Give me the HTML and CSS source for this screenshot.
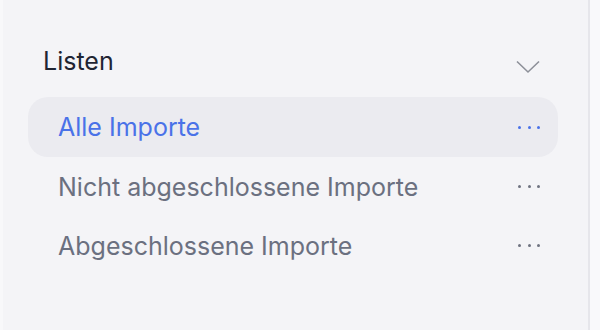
FILE: index.html
```html
<!DOCTYPE html>
<html lang="de">
<head>
<meta charset="UTF-8">
<title>Listen</title>
<link rel="stylesheet" href="styles.css">
</head>
<body>
    <div class="page">
        <aside class="sidebar">
            <div class="section-head">
                <span class="section-title">Listen</span>
                <svg class="chevron" width="24" height="14" viewBox="0 0 24 14">
                    <path d="M1 1.5 L12 12 L23 1.5" fill="none" stroke="#8d9099" stroke-width="1.6"/>
                </svg>
            </div>
            <ul class="lists">
                <li class="list-item active">
                    <span>Alle Importe</span>
                    <span class="more"><i></i><i></i><i></i></span>
                </li>
                <li class="list-item">
                    <span>Nicht abgeschlossene Importe</span>
                    <span class="more"><i></i><i></i><i></i></span>
                </li>
                <li class="list-item">
                    <span>Abgeschlossene Importe</span>
                    <span class="more"><i></i><i></i><i></i></span>
                </li>
            </ul>
        </aside>
        <div class="content"></div>
    </div>
</body>
</html>
```

FILE: styles.css
```css
* {
    box-sizing: border-box;
}
body {
    margin: 0;
    font-family: Inter, "Noto Sans", sans-serif;
    background-color: #f9f9fb;
}
.page {
    display: flex;
    height: 330px;
}
.sidebar {
    width: 590px;
    padding: 36px 30px 0 25px;
    background-color: #f4f4f7;
    border-left: 3px solid #f8f8fa;
    border-right: 2px solid #e6e6eb;
    flex-shrink: 0;
}
.content {
    flex: 1;
}
.section-head {
    display: flex;
    justify-content: space-between;
    align-items: center;
    height: 50px;
    padding: 0 18px 0 15px;
}
.section-title {
    font-size: 25px;
    color: #1f2533;
}
.chevron {
    margin-top: 12px;
}
.lists {
    list-style: none;
    margin: 11px 0 0;
    padding: 0;
}
.list-item {
    display: flex;
    justify-content: space-between;
    align-items: center;
    height: 59px;
    padding: 0 18px 0 30px;
    border-radius: 20px;
    font-size: 25px;
    color: #6b7080;
}
.list-item.active {
    height: 60px;
    background-color: #ebebf0;
    color: #4a72e8;
}
.more {
    display: flex;
    gap: 6.5px;
}
.more i {
    width: 3px;
    height: 3px;
    border-radius: 50%;
    background-color: #6f7380;
}
.active .more i {
    background-color: #4a72e8;
}
```
